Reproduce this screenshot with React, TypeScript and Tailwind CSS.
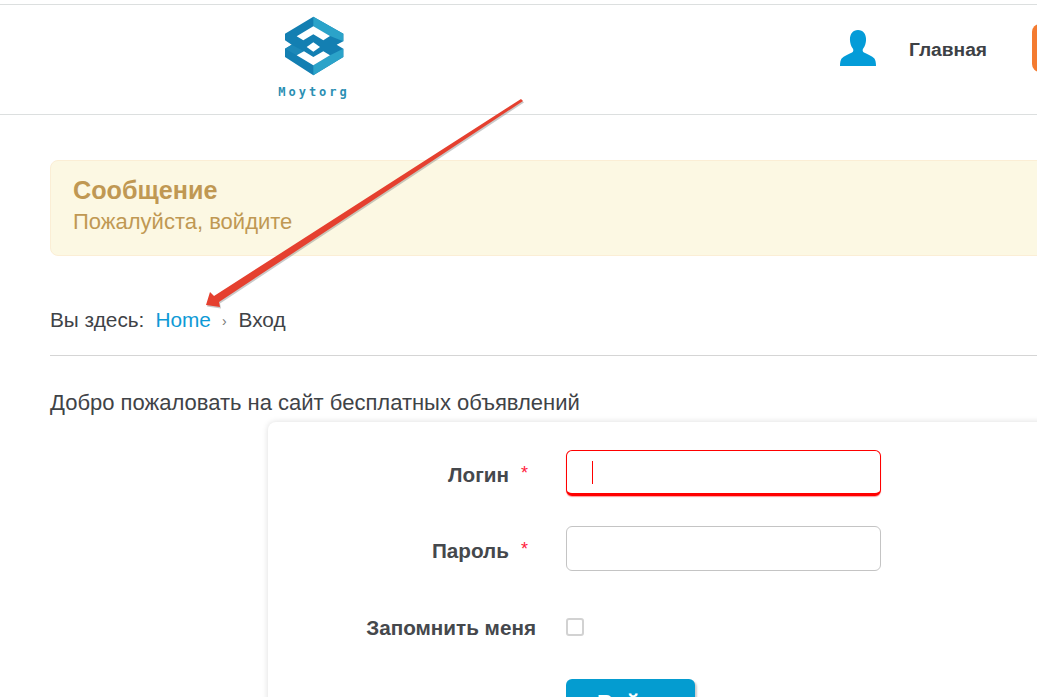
import React from 'react';

// Logo: two interlocking hexagon bands
const Logo: React.FC = () => (
    <svg width="70" height="68" viewBox="0 0 210 204">
        <polygon points="100,14 190,65 190,88 170,98 190,110 190,135 100,190 15,135 15,110 35,98 15,85 15,65" fill="#137fb2" />
        <polygon points="100,14 190,65 190,88 150,72 100,44" fill="#2ba3c9" />
        <polygon points="100,190 190,135 190,110 150,130 100,160" fill="#2ba3c9" />
        <polygon points="35,98 72,118 50,130 15,110" fill="#1c88b8" />
        <polygon points="50,73 100,43 150,72 130,85 100,67 70,85" fill="#ffffff" />
        <polygon points="100,91 120,105 100,119 80,105" fill="#ffffff" />
        <polygon points="50,130 72,118 100,135 130,118 150,130 100,160" fill="#ffffff" />
    </svg>
);

const UserIcon: React.FC = () => (
    <svg width="36" height="36" viewBox="0 0 38 36" preserveAspectRatio="none">
        <path
            d="M19 0c5.500 0 8.500 4 8.500 9.500 0 3.500-1.200 6.800-3 9-.9 1.200-.8 3.200.8 4 3.500 1.700 8.700 3.500 11 6 1 1.200 1.700 3.800 1.700 7.500H0c0-3.700.7-6.300 1.700-7.500 2.300-2.500 7.500-4.300 11-6 1.600-.8 1.700-2.800.8-4-1.800-2.200-3-5.500-3-9C10.500 4 13.500 0 19 0z"
            fill="#049cd8"
        />
    </svg>
);

const Header: React.FC = () => (
    <header className="mt-1 h-[111px] border-y border-[#dcdfdf] bg-white flex shrink-0">
        <div className="w-[628px] shrink-0 pl-[280px] pt-[7px] flex flex-col items-start">
            <Logo />
            <span className="ml-[-6px] mt-[5px] w-[80px] text-center font-['DejaVu_Sans_Mono',monospace] font-bold text-[12px] leading-[14px] tracking-[3px] text-[#2b8fb3]">
                Moytorg
            </span>
        </div>
        <div className="flex items-start pt-[25px]">
            <div className="ml-[212px]"><UserIcon /></div>
            <a className="ml-[33px] mt-[8px] font-bold text-[19.2px] leading-6 text-[#3d4145]">Главная</a>
            <div className="ml-[45px] mt-[-6px] w-20 h-12 rounded-lg bg-[#f47b30] shrink-0" />
        </div>
    </header>
);

const Arrow: React.FC = () => (
    <svg className="absolute left-0 top-0 pointer-events-none" width="1037" height="697" viewBox="0 0 1037 697">
        <polygon points="206,305 210,292 214,296 521,99 523,101 219,302 220,307" fill="#777777" opacity="0.4" transform="translate(1 1.5)" />
        <polygon points="206,305 210,292 214,296 521,99 523,101 219,302 220,307" fill="#e5402f" />
    </svg>
);

const LoginForm: React.FC = () => (
    <div className="ml-[268px] mt-[7px] w-[900px] h-[400px] bg-white rounded-t-lg shadow-[0_0_6px_rgba(0,0,0,0.14)] pt-[28px] pl-[298px] flex flex-col items-start">
        <div className="flex items-center h-[46px]">
            <input
                readOnly
                className="w-[315px] h-[46px] rounded-md border border-[#ff0000] border-b-[3px] shadow-[0_1px_1px_rgba(255,0,0,0.4)] bg-white outline-none"
            />
        </div>
        <div className="mt-[30px] flex items-center h-[45px]">
            <input readOnly className="w-[315px] h-[45px] rounded-md border border-[#c4c4c4] bg-white outline-none" />
        </div>
        <div className="mt-[47px] w-[18px] h-[18px] rounded-[3px] border-2 border-[#d2d2d2] bg-white" />
        <button className="mt-[43px] w-[129px] h-[48px] rounded-md bg-[#049cd0] shadow-[2px_2px_2px_rgba(0,0,0,0.2)] pb-[2px] text-white font-bold text-[22px]">
            Войти
        </button>
    </div>
);

const FormLabels: React.FC = () => (
    <div className="absolute left-[268px] top-[421px] w-[268px] font-bold text-[20.7px] text-[#45484c] leading-6 flex flex-col items-end">
        <div className="mt-[40px] pr-[8px]">Логин<span className="ml-3 text-[#ff1a3c] font-normal text-[18px] align-[3px]">*</span></div>
        <div className="mt-[50px] pr-[8px]">Пароль<span className="ml-3 text-[#ff1a3c] font-normal text-[18px] align-[3px]">*</span></div>
        <div className="mt-[53px]">Запомнить меня</div>
    </div>
);

export default function App() {
    return (
        <div className="relative w-[1037px] h-[697px] overflow-hidden bg-white font-['Liberation_Sans',Arial,sans-serif] flex flex-col">
            <Header />

            <div className="ml-[50px] mt-[45px] w-[1100px] h-[96px] shrink-0 rounded-lg border border-[#fbeed5] bg-[#fcf8e3] pl-[22px] pt-[14px]">
                <h4 className="font-bold text-[25.2px] leading-[30px] text-[#c09853]">Сообщение</h4>
                <p className="mt-[1px] text-[22px] leading-[32px] text-[#c09853]">Пожалуйста, войдите</p>
            </div>

            <nav className="ml-[50px] mt-[52px] w-[1100px] h-[48px] shrink-0 border-b border-[#d5d5d5] flex items-start text-[20.8px] leading-6 text-[#3f4347]">
                <span>Вы здесь:</span>
                <a className="ml-[11px] text-[#0e9ad6]">Home</a>
                <span className="ml-[11px] mt-[1px] text-[14px] text-[#777]">›</span>
                <span className="ml-[12px]">Вход</span>
            </nav>

            <p className="ml-[50px] mt-[35px] text-[22px] leading-6 text-[#3f4347] shrink-0">
                Добро пожаловать на сайт бесплатных объявлений
            </p>

            <LoginForm />
            <FormLabels />
            <div className="absolute left-[592px] top-[461px] w-px h-[23px] bg-[#ff0000]" />
            <Arrow />
        </div>
    );
}
